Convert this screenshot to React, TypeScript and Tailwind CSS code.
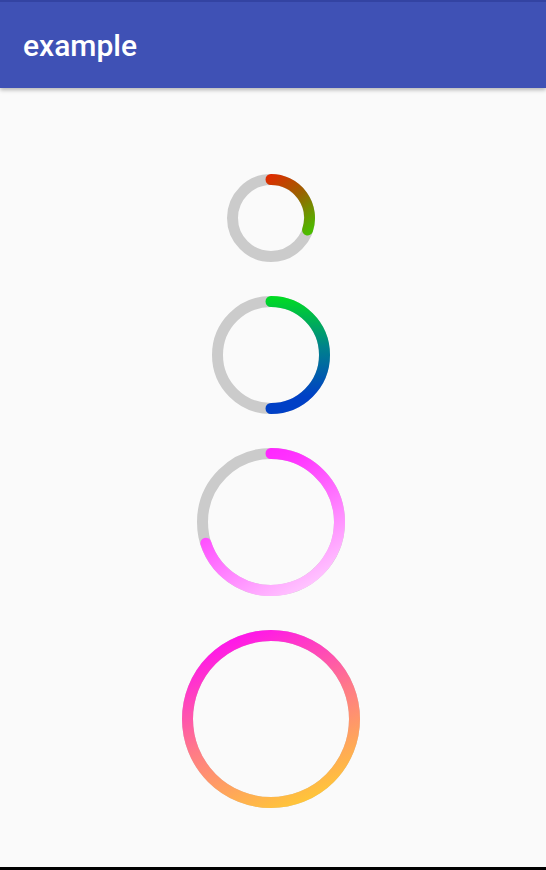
import React from "react";

type RingProps = {
  size: number;
  progress: number;
  id: string;
  stops: { offset: string; color: string }[];
  x1: number;
  y1: number;
  x2: number;
  y2: number;
};

function Ring({ size, progress, id, stops, x1, y1, x2, y2 }: RingProps) {
  const sw = 11;
  const c = size / 2;
  const r = (size - sw) / 2;
  const full = progress >= 1;
  const a = progress * 2 * Math.PI;
  const ex = c + r * Math.sin(a);
  const ey = c - r * Math.cos(a);
  const large = progress > 0.5 ? 1 : 0;
  const d = `M ${c} ${c - r} A ${r} ${r} 0 ${large} 1 ${ex} ${ey}`;
  return (
    <svg width={size} height={size} viewBox={`0 0 ${size} ${size}`} className="block">
      <defs>
        <linearGradient
          id={id}
          gradientUnits="userSpaceOnUse"
          x1={x1 * size}
          y1={y1 * size}
          x2={x2 * size}
          y2={y2 * size}
        >
          {stops.map((s) => (
            <stop key={s.offset} offset={s.offset} stopColor={s.color} />
          ))}
        </linearGradient>
      </defs>
      <circle cx={c} cy={c} r={r} fill="none" stroke="#cbcbcb" strokeWidth={sw} />
      {full ? (
        <circle cx={c} cy={c} r={r} fill="none" stroke={`url(#${id})`} strokeWidth={sw} />
      ) : (
        <path d={d} fill="none" stroke={`url(#${id})`} strokeWidth={sw} strokeLinecap="round" />
      )}
    </svg>
  );
}

export default function App() {
  return (
    <div className="h-[870px] w-[546px] flex flex-col bg-[#fafafa] overflow-hidden">
      <div className="relative z-10 shadow-[0_2px_4px_rgba(0,0,0,0.28)]">
        <div className="h-[2px] bg-[#3343a2]" />
        <div
          className="h-[86px] bg-[#3f51b5] flex items-center pl-[23px] text-white text-[30px] font-medium"
          style={{ fontFamily: "Roboto, 'Noto Sans', sans-serif" }}
        >
          <span className="mt-[1px]">example</span>
        </div>
      </div>
      <div className="flex-1 flex flex-col items-center pt-[86px] gap-[34px] pr-[4px]">
        <Ring
          size={88}
          progress={0.3}
          id="g1"
          x1={0.45}
          y1={0}
          x2={0.95}
          y2={0.65}
          stops={[
            { offset: "0", color: "#e62600" },
            { offset: "0.5", color: "#9a6200" },
            { offset: "1", color: "#4cbc00" },
          ]}
        />
        <Ring
          size={118}
          progress={0.5}
          id="g2"
          x1={0.5}
          y1={0}
          x2={0.5}
          y2={0.85}
          stops={[
            { offset: "0", color: "#00de20" },
            { offset: "0.5", color: "#00838a" },
            { offset: "1", color: "#0040c6" },
          ]}
        />
        <Ring
          size={148}
          progress={0.7}
          id="g3"
          x1={0.2}
          y1={0}
          x2={0.8}
          y2={1}
          stops={[
            { offset: "0", color: "#ff1aff" },
            { offset: "0.25", color: "#ff33ff" },
            { offset: "1", color: "#ffd2ff" },
          ]}
        />
        <Ring
          size={178}
          progress={1}
          id="g4"
          x1={0.3}
          y1={0.02}
          x2={0.7}
          y2={0.98}
          stops={[
            { offset: "0", color: "#ff12ee" },
            { offset: "0.5", color: "#ff7a88" },
            { offset: "1", color: "#ffc836" },
          ]}
        />
      </div>
      <div className="h-[3px] bg-black" />
    </div>
  );
}
